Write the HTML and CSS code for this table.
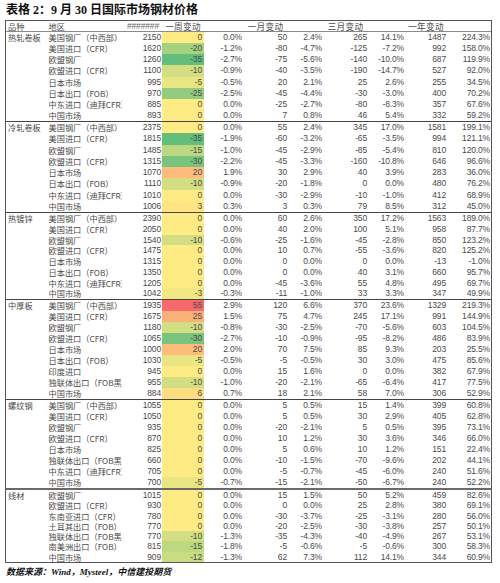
FILE: index.html
```html
<!DOCTYPE html>
<html lang="zh-CN">
<head>
<meta charset="utf-8">
<title>表格 2：9 月 30 日国际市场钢材价格</title>
<link rel="stylesheet" href="styles.css">
</head>
<body>
<div class="page">
  <div class="title">表格 2：9 月 30 日国际市场钢材价格</div>
  <div class="table">
    <div class="row head"><span class="k">品种</span><span class="r">地区</span><span class="hash">#######</span><span class="hc">一周变动</span><span></span><span class="hc">一月变动</span><span></span><span class="hc">三月变动</span><span></span><span class="hc">一年变动</span><span></span></div>

    <div class="section s1">
      <div class="row"><span class="k">热轧卷板</span><span class="r">美国钢厂（中西部）</span><span>2150</span><span class="w" style="background:#FFEB84">0</span><span>0.0%</span><span>50</span><span>2.4%</span><span>265</span><span>14.1%</span><span>1487</span><span>224.3%</span></div>
      <div class="row"><span class="k"></span><span class="r">美国进口（CFR）</span><span>1620</span><span class="w" style="background:#A6D17F">-20</span><span>-1.2%</span><span>-80</span><span>-4.7%</span><span>-125</span><span>-7.2%</span><span>992</span><span>158.0%</span></div>
      <div class="row"><span class="k"></span><span class="r">欧盟钢厂</span><span>1260</span><span class="w" style="background:#63BE7B">-35</span><span>-2.7%</span><span>-75</span><span>-5.6%</span><span>-140</span><span>-10.0%</span><span>687</span><span>119.9%</span></div>
      <div class="row"><span class="k"></span><span class="r">欧盟进口（CFR）</span><span>1100</span><span class="w" style="background:#D2DE81">-10</span><span>-0.9%</span><span>-40</span><span>-3.5%</span><span>-190</span><span>-14.7%</span><span>527</span><span>92.0%</span></div>
      <div class="row"><span class="k"></span><span class="r">日本市场</span><span>995</span><span class="w" style="background:#E9E583">-5</span><span>-0.5%</span><span>20</span><span>2.1%</span><span>25</span><span>2.6%</span><span>255</span><span>34.5%</span></div>
      <div class="row"><span class="k"></span><span class="r">日本出口（FOB）</span><span>970</span><span class="w" style="background:#90CB7E">-25</span><span>-2.5%</span><span>-45</span><span>-4.4%</span><span>-30</span><span>-3.0%</span><span>400</span><span>70.2%</span></div>
      <div class="row"><span class="k"></span><span class="r">中东进口（迪拜CFR）</span><span>885</span><span class="w" style="background:#FFEB84">0</span><span>0.0%</span><span>-25</span><span>-2.7%</span><span>-80</span><span>-8.3%</span><span>357</span><span>67.6%</span></div>
      <div class="row"><span class="k"></span><span class="r">中国市场</span><span>893</span><span class="w" style="background:#FFEB84">0</span><span>0.0%</span><span>7</span><span>0.8%</span><span>46</span><span>5.4%</span><span>332</span><span>59.2%</span></div>
    </div>

    <div class="section s2">
      <div class="row"><span class="k">冷轧卷板</span><span class="r">美国钢厂（中西部）</span><span>2375</span><span class="w" style="background:#FFEB84">0</span><span>0.0%</span><span>55</span><span>2.4%</span><span>345</span><span>17.0%</span><span>1581</span><span>199.1%</span></div>
      <div class="row"><span class="k"></span><span class="r">美国进口（CFR）</span><span>1815</span><span class="w" style="background:#63BE7B">-35</span><span>-1.9%</span><span>-60</span><span>-3.2%</span><span>-65</span><span>-3.5%</span><span>994</span><span>121.1%</span></div>
      <div class="row"><span class="k"></span><span class="r">欧盟钢厂</span><span>1485</span><span class="w" style="background:#BCD880">-15</span><span>-1.0%</span><span>-45</span><span>-2.9%</span><span>-85</span><span>-5.4%</span><span>810</span><span>120.0%</span></div>
      <div class="row"><span class="k"></span><span class="r">欧盟进口（CFR）</span><span>1315</span><span class="w" style="background:#79C47C">-30</span><span>-2.2%</span><span>-45</span><span>-3.3%</span><span>-160</span><span>-10.8%</span><span>646</span><span>96.6%</span></div>
      <div class="row"><span class="k"></span><span class="r">日本市场</span><span>1070</span><span class="w" style="background:#FDBC7B">20</span><span>1.9%</span><span>30</span><span>2.9%</span><span>40</span><span>3.9%</span><span>283</span><span>36.0%</span></div>
      <div class="row"><span class="k"></span><span class="r">日本出口（FOB）</span><span>1110</span><span class="w" style="background:#D2DE81">-10</span><span>-0.9%</span><span>-20</span><span>-1.8%</span><span>0</span><span>0.0%</span><span>480</span><span>76.2%</span></div>
      <div class="row"><span class="k"></span><span class="r">中东进口（迪拜CFR）</span><span>1010</span><span class="w" style="background:#FFEB84">0</span><span>0.0%</span><span>-30</span><span>-2.9%</span><span>-10</span><span>-1.0%</span><span>412</span><span>68.9%</span></div>
      <div class="row"><span class="k"></span><span class="r">中国市场</span><span>1006</span><span class="w" style="background:#FFE483">3</span><span>0.3%</span><span>3</span><span>0.3%</span><span>79</span><span>8.5%</span><span>312</span><span>45.0%</span></div>
    </div>

    <div class="section s3">
      <div class="row"><span class="k">热镀锌</span><span class="r">美国钢厂（中西部）</span><span>2390</span><span class="w" style="background:#FFEB84">0</span><span>0.0%</span><span>60</span><span>2.6%</span><span>350</span><span>17.2%</span><span>1563</span><span>189.0%</span></div>
      <div class="row"><span class="k"></span><span class="r">美国进口（CFR）</span><span>2050</span><span class="w" style="background:#FFEB84">0</span><span>0.0%</span><span>40</span><span>2.0%</span><span>100</span><span>5.1%</span><span>958</span><span>87.7%</span></div>
      <div class="row"><span class="k"></span><span class="r">欧盟钢厂</span><span>1540</span><span class="w" style="background:#D2DE81">-10</span><span>-0.6%</span><span>-25</span><span>-1.6%</span><span>-45</span><span>-2.8%</span><span>850</span><span>123.2%</span></div>
      <div class="row"><span class="k"></span><span class="r">欧盟进口（CFR）</span><span>1475</span><span class="w" style="background:#FFEB84">0</span><span>0.0%</span><span>10</span><span>0.7%</span><span>-55</span><span>-3.6%</span><span>820</span><span>125.2%</span></div>
      <div class="row"><span class="k"></span><span class="r">日本市场</span><span>1315</span><span class="w" style="background:#FFEB84">0</span><span>0.0%</span><span>0</span><span>0.0%</span><span>0</span><span>0.0%</span><span>-13</span><span>-1.0%</span></div>
      <div class="row"><span class="k"></span><span class="r">日本出口（FOB）</span><span>1350</span><span class="w" style="background:#FFEB84">0</span><span>0.0%</span><span>0</span><span>0.0%</span><span>40</span><span>3.1%</span><span>660</span><span>95.7%</span></div>
      <div class="row"><span class="k"></span><span class="r">中东进口（迪拜CFR）</span><span>1205</span><span class="w" style="background:#FFEB84">0</span><span>0.0%</span><span>-45</span><span>-3.6%</span><span>55</span><span>4.8%</span><span>495</span><span>69.7%</span></div>
      <div class="row"><span class="k"></span><span class="r">中国市场</span><span>1042</span><span class="w" style="background:#F2E783">-3</span><span>-0.3%</span><span>-11</span><span>-1.0%</span><span>33</span><span>3.3%</span><span>347</span><span>49.9%</span></div>
    </div>

    <div class="section s4">
      <div class="row"><span class="k">中厚板</span><span class="r">美国钢厂（中西部）</span><span>1935</span><span class="w" style="background:#F8696B">55</span><span>2.9%</span><span>120</span><span>6.6%</span><span>370</span><span>23.6%</span><span>1329</span><span>219.3%</span></div>
      <div class="row"><span class="k"></span><span class="r">美国进口（CFR）</span><span>1675</span><span class="w" style="background:#FCB079">25</span><span>1.5%</span><span>75</span><span>4.7%</span><span>245</span><span>17.1%</span><span>991</span><span>144.9%</span></div>
      <div class="row"><span class="k"></span><span class="r">欧盟钢厂</span><span>1180</span><span class="w" style="background:#D2DE81">-10</span><span>-0.8%</span><span>-30</span><span>-2.5%</span><span>-70</span><span>-5.6%</span><span>603</span><span>104.5%</span></div>
      <div class="row"><span class="k"></span><span class="r">欧盟进口（CFR）</span><span>1065</span><span class="w" style="background:#79C47C">-30</span><span>-2.7%</span><span>-10</span><span>-0.9%</span><span>-95</span><span>-8.2%</span><span>486</span><span>83.9%</span></div>
      <div class="row"><span class="k"></span><span class="r">日本市场</span><span>1000</span><span class="w" style="background:#FDBC7B">20</span><span>2.0%</span><span>70</span><span>7.5%</span><span>85</span><span>9.3%</span><span>203</span><span>25.5%</span></div>
      <div class="row"><span class="k"></span><span class="r">日本出口（FOB）</span><span>1030</span><span class="w" style="background:#E9E583">-5</span><span>-0.5%</span><span>-5</span><span>-0.5%</span><span>30</span><span>3.0%</span><span>475</span><span>85.6%</span></div>
      <div class="row"><span class="k"></span><span class="r">印度进口</span><span>945</span><span class="w" style="background:#FFEB84">0</span><span>0.0%</span><span>15</span><span>1.6%</span><span>0</span><span>0.0%</span><span>382</span><span>67.9%</span></div>
      <div class="row"><span class="k"></span><span class="r">独联体出口（FOB黑海）</span><span>955</span><span class="w" style="background:#D2DE81">-10</span><span>-1.0%</span><span>-20</span><span>-2.1%</span><span>-65</span><span>-6.4%</span><span>417</span><span>77.5%</span></div>
      <div class="row"><span class="k"></span><span class="r">中国市场</span><span>884</span><span class="w" style="background:#FEDD81">6</span><span>0.7%</span><span>18</span><span>2.1%</span><span>58</span><span>7.0%</span><span>306</span><span>52.9%</span></div>
    </div>

    <div class="section s5">
      <div class="row"><span class="k">螺纹钢</span><span class="r">美国钢厂（中西部）</span><span>1055</span><span class="w" style="background:#FFEB84">0</span><span>0.0%</span><span>5</span><span>0.5%</span><span>15</span><span>1.4%</span><span>399</span><span>60.8%</span></div>
      <div class="row"><span class="k"></span><span class="r">美国进口（CFR）</span><span>1050</span><span class="w" style="background:#FFEB84">0</span><span>0.0%</span><span>5</span><span>0.5%</span><span>30</span><span>2.9%</span><span>405</span><span>62.8%</span></div>
      <div class="row"><span class="k"></span><span class="r">欧盟钢厂</span><span>935</span><span class="w" style="background:#FFEB84">0</span><span>0.0%</span><span>-20</span><span>-2.1%</span><span>5</span><span>0.5%</span><span>395</span><span>73.1%</span></div>
      <div class="row"><span class="k"></span><span class="r">欧盟进口（CFR）</span><span>870</span><span class="w" style="background:#FFEB84">0</span><span>0.0%</span><span>10</span><span>1.2%</span><span>30</span><span>3.6%</span><span>346</span><span>66.0%</span></div>
      <div class="row"><span class="k"></span><span class="r">日本市场</span><span>825</span><span class="w" style="background:#FFEB84">0</span><span>0.0%</span><span>5</span><span>0.6%</span><span>10</span><span>1.2%</span><span>151</span><span>22.4%</span></div>
      <div class="row"><span class="k"></span><span class="r">独联体出口（FOB黑海）</span><span>660</span><span class="w" style="background:#FFEB84">0</span><span>0.0%</span><span>-10</span><span>-1.5%</span><span>-70</span><span>-9.6%</span><span>202</span><span>44.1%</span></div>
      <div class="row"><span class="k"></span><span class="r">中东进口（迪拜CFR）</span><span>705</span><span class="w" style="background:#FFEB84">0</span><span>0.0%</span><span>-5</span><span>-0.7%</span><span>-45</span><span>-6.0%</span><span>240</span><span>51.6%</span></div>
      <div class="row"><span class="k"></span><span class="r">中国市场</span><span>700</span><span class="w" style="background:#E9E583">-5</span><span>-0.7%</span><span>-15</span><span>-2.1%</span><span>-50</span><span>-6.7%</span><span>240</span><span>52.2%</span></div>
    </div>

    <div class="section s6">
      <div class="row"><span class="k">线材</span><span class="r">欧盟钢厂</span><span>1015</span><span class="w" style="background:#FFEB84">0</span><span>0.0%</span><span>15</span><span>1.5%</span><span>50</span><span>5.2%</span><span>459</span><span>82.6%</span></div>
      <div class="row"><span class="k"></span><span class="r">欧盟进口（CFR）</span><span>930</span><span class="w" style="background:#FFEB84">0</span><span>0.0%</span><span>0</span><span>0.0%</span><span>25</span><span>2.8%</span><span>380</span><span>69.1%</span></div>
      <div class="row"><span class="k"></span><span class="r">东南亚进口（CFR）</span><span>780</span><span class="w" style="background:#FFEB84">0</span><span>0.0%</span><span>-30</span><span>-3.7%</span><span>-25</span><span>-3.1%</span><span>280</span><span>56.0%</span></div>
      <div class="row"><span class="k"></span><span class="r">土耳其出口（FOB）</span><span>770</span><span class="w" style="background:#FFEB84">0</span><span>0.0%</span><span>-20</span><span>-2.5%</span><span>-30</span><span>-3.8%</span><span>257</span><span>50.1%</span></div>
      <div class="row"><span class="k"></span><span class="r">独联体出口（FOB黑海）</span><span>770</span><span class="w" style="background:#D2DE81">-10</span><span>-1.3%</span><span>-35</span><span>-4.3%</span><span>-40</span><span>-4.9%</span><span>267</span><span>53.1%</span></div>
      <div class="row"><span class="k"></span><span class="r">南美洲出口（FOB）</span><span>815</span><span class="w" style="background:#BCD880">-15</span><span>-1.8%</span><span>-5</span><span>-0.6%</span><span>-5</span><span>-0.6%</span><span>300</span><span>58.3%</span></div>
      <div class="row"><span class="k"></span><span class="r">中国市场</span><span>909</span><span class="w" style="background:#C9DC81">-12</span><span>-1.3%</span><span>62</span><span>7.3%</span><span>112</span><span>14.1%</span><span>344</span><span>60.9%</span></div>
    </div>
  </div>
  <div class="source">数据来源：Wind，Mysteel，中信建投期货</div>
</div>
</body>
</html>
```

FILE: styles.css
```css
html, body {
  margin: 0;
  padding: 0;
  background: #ffffff;
}

body {
  font-family: "Liberation Sans", "Noto Sans CJK SC", sans-serif;
  color: #4a4a4a;
}

.page {
  padding-left: 5px;
  width: 487px;
}

.title {
  height: 20px;
  padding-left: 1px;
  font-family: "Liberation Serif", "Noto Sans CJK SC", serif;
  font-weight: bold;
  font-size: 12px;
  line-height: 20px;
  color: #111111;
  white-space: nowrap;
}

.table {
  width: 485px;
  border: 1px solid #555555;
}

.row {
  display: grid;
  grid-template-columns: 41px 75px 40px 42px 39px 45px 35px 45px 37px 42px 44px;
  height: 11px;
}

.row > span {
  display: block;
  overflow: hidden;
  white-space: nowrap;
  text-align: right;
  padding-right: 1px;
  font-size: 8.5px;
  line-height: inherit;
  letter-spacing: -0.15px;
}

.row > .k,
.row > .r {
  text-align: left;
  padding-right: 0;
  font-family: "Noto Sans CJK SC", sans-serif;
  font-size: 8.2px;
  letter-spacing: 0;
}

.row > .k {
  padding-left: 2px;
}

.row > .r {
  padding-left: 1.5px;
}

.row > .w {
  padding-right: 2px;
}

.head {
  height: 10px;
  line-height: 10px;
  border-bottom: 1px solid #8a8a8a;
}

.head > .hash {
  color: #666666;
  padding-right: 3px;
}

.head > .hc {
  text-align: center;
  padding-right: 0;
  font-family: "Noto Sans CJK SC", sans-serif;
  font-size: 8.6px;
  letter-spacing: 0.3px;
  overflow: visible;
}

.section + .section {
  border-top: 1px solid #444444;
}

.s5 + .s6 {
  border-top: 2px solid #6a6a6a;
}

.s1 .row { height: 11.125px; line-height: 11.125px; }
.s2 .row { height: 11.25px; line-height: 11.25px; }
.s3 .row { height: 10.75px; line-height: 10.75px; }
.s4 .row { height: 11px; line-height: 11px; }
.s5 .row { height: 11px; line-height: 11px; }
.s6 .row { height: 10.3px; line-height: 10.3px; }

.source {
  margin-top: 4px;
  padding-left: 1px;
  font-family: "Liberation Serif", "Noto Sans CJK SC", serif;
  font-weight: bold;
  font-style: italic;
  font-size: 9px;
  line-height: 10px;
  color: #111111;
  white-space: nowrap;
}
```
